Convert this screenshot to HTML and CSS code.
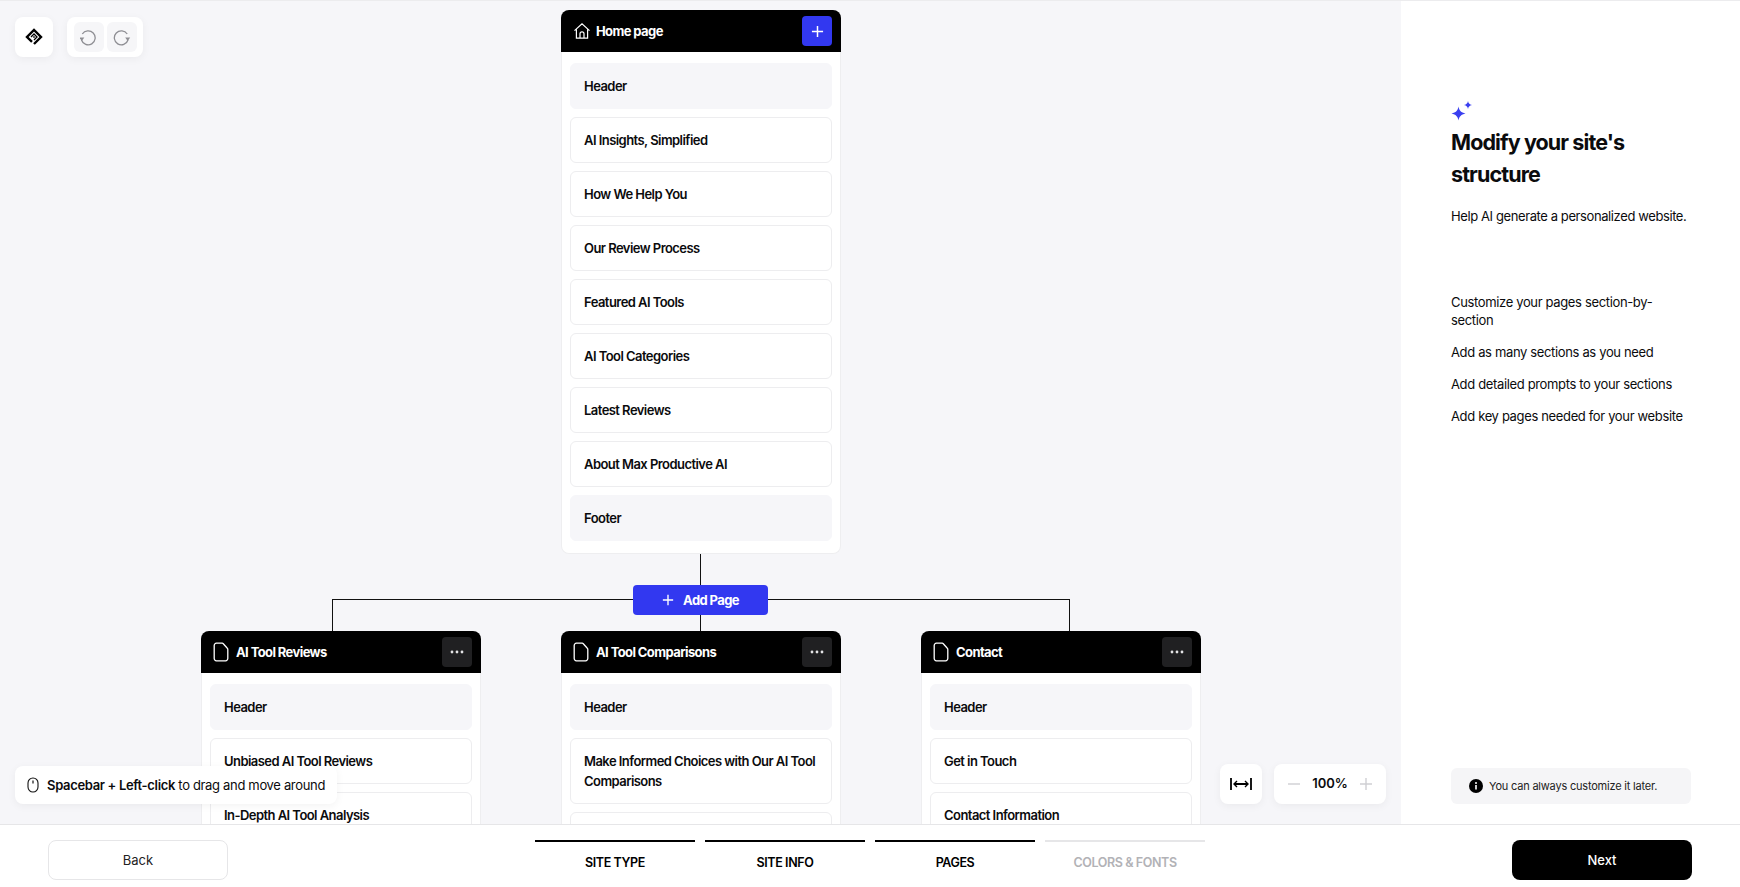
FILE: index.html
```html
<!DOCTYPE html>
<html lang="en">
<head>
  <meta charset="UTF-8">
  <title>Modify your site's structure</title>
  <link rel="stylesheet" href="styles.css">
</head>
<body>
  <svg class="sprites" width="0" height="0">
    <symbol id="icon-doc" viewBox="0 0 16 20">
      <path d="M3.400 1.200h5.800c.4 0 .8.200 1.100.5l4 4.600c.3.300.5.700.5 1.100v9.200a2.200 2.200 0 0 1-2.200 2.200H3.400a2.200 2.200 0 0 1-2.200-2.200V3.400a2.200 2.200 0 0 1 2.200-2.200z" fill="none" stroke="currentColor" stroke-width="1.300"/>
    </symbol>
    <symbol id="icon-dots" viewBox="0 0 14 4">
      <circle cx="2" cy="2" r="1.400" fill="currentColor"/>
      <circle cx="7" cy="2" r="1.400" fill="currentColor"/>
      <circle cx="12" cy="2" r="1.400" fill="currentColor"/>
    </symbol>
  </svg>

  <div class="workspace">
    <main class="canvas">
      <!-- lineas entre paginas -->
      <div class="line line-down"></div>
      <div class="line line-across"></div>
      <div class="line line-left"></div>
      <div class="line line-right"></div>

      <section class="page-card home-card">
        <div class="page-head">
          <svg class="head-icon home-icon" viewBox="0 0 18 18" width="18" height="18"><path d="M1.500 8.600 9 1.800l7.500 6.800M3.400 7.400v8.800h11.200V7.400M7 16.200v-4.400a2 2 0 0 1 4 0v4.400" fill="none" stroke="currentColor" stroke-width="1.200"/></svg>
          <span class="page-name">Home page</span>
          <button class="head-btn head-btn-add">
            <svg viewBox="0 0 14 14" width="13" height="13"><path d="M7 1v12M1 7h12" stroke="currentColor" stroke-width="1.600"/></svg>
          </button>
        </div>
        <div class="page-body">
          <div class="section fixed">Header</div>
          <div class="section">AI Insights, Simplified</div>
          <div class="section">How We Help You</div>
          <div class="section">Our Review Process</div>
          <div class="section">Featured AI Tools</div>
          <div class="section">AI Tool Categories</div>
          <div class="section">Latest Reviews</div>
          <div class="section">About Max Productive AI</div>
          <div class="section fixed">Footer</div>
        </div>
      </section>

      <button class="add-page">
        <svg viewBox="0 0 14 14" width="12" height="12"><path d="M7 1v12M1 7h12" stroke="currentColor" stroke-width="1.600"/></svg>
        Add Page
      </button>

      <section class="page-card child-card card-left">
        <div class="page-head">
          <svg class="head-icon" width="16" height="20"><use href="#icon-doc"/></svg>
          <span class="page-name">AI Tool Reviews</span>
          <button class="head-btn"><svg width="14" height="4"><use href="#icon-dots"/></svg></button>
        </div>
        <div class="page-body">
          <div class="section fixed">Header</div>
          <div class="section">Unbiased AI Tool Reviews</div>
          <div class="section">In-Depth AI Tool Analysis</div>
        </div>
      </section>

      <section class="page-card child-card card-middle">
        <div class="page-head">
          <svg class="head-icon" width="16" height="20"><use href="#icon-doc"/></svg>
          <span class="page-name">AI Tool Comparisons</span>
          <button class="head-btn"><svg width="14" height="4"><use href="#icon-dots"/></svg></button>
        </div>
        <div class="page-body">
          <div class="section fixed">Header</div>
          <div class="section">Make Informed Choices with Our AI Tool Comparisons</div>
          <div class="section"></div>
        </div>
      </section>

      <section class="page-card child-card card-right">
        <div class="page-head">
          <svg class="head-icon" width="16" height="20"><use href="#icon-doc"/></svg>
          <span class="page-name">Contact</span>
          <button class="head-btn"><svg width="14" height="4"><use href="#icon-dots"/></svg></button>
        </div>
        <div class="page-body">
          <div class="section fixed">Header</div>
          <div class="section">Get in Touch</div>
          <div class="section">Contact Information</div>
        </div>
      </section>

      <div class="float logo-box">
        <svg viewBox="0 0 20 20" width="20" height="20">
          <path d="M8 14.800 3 10 10 3l7 7-7 7" fill="none" stroke="#000" stroke-width="2.400"/>
          <path d="M7 10 10 7l3 3-3 3" fill="none" stroke="#000" stroke-width="1.300"/>
          <path d="M9.200 10h1.600" stroke="#000" stroke-width="1.600"/>
        </svg>
      </div>
      <div class="float history">
        <button class="history-btn">
          <svg viewBox="1.500 0 18 18" width="18" height="18"><path d="M3.800 6A7 7 0 1 1 3 12" fill="none" stroke="#8e8e93" stroke-width="1.300"/><path d="M0.800 9.600h5L3.300 13z" fill="#8e8e93"/></svg>
        </button>
        <button class="history-btn">
          <svg viewBox="0 0 18 18" width="18" height="18"><path d="M14.200 6A7 7 0 1 0 15 12" fill="none" stroke="#8e8e93" stroke-width="1.300"/><path d="M12.200 9.600h5L14.700 13z" fill="#8e8e93"/></svg>
        </button>
      </div>

      <div class="float hint">
        <svg viewBox="0 0 12 16" width="12" height="16"><rect x="1" y="1" width="10" height="14" rx="5" fill="none" stroke="#111" stroke-width="1.100"/><path d="M6 3.500v3" stroke="#111" stroke-width="1.200"/></svg>
        <span><b>Spacebar + Left-click</b> to drag and move around</span>
      </div>

      <div class="float fit-btn">
        <svg viewBox="0 0 22 12" width="22" height="12"><path d="M1 0v12M21 0v12M4 6h14" stroke="#000" stroke-width="1.800" fill="none"/><path d="M7 3 4 6l3 3M15 3l3 3-3 3" stroke="#000" stroke-width="1.400" fill="none"/></svg>
      </div>
      <div class="float zoom-box">
        <svg viewBox="0 0 12 12" width="12" height="12"><path d="M0 6h12" stroke="#cfcfd3" stroke-width="1.400"/></svg>
        <span class="zoom-value">100%</span>
        <svg viewBox="0 0 12 12" width="12" height="12"><path d="M0 6h12M6 0v12" stroke="#cfcfd3" stroke-width="1.400"/></svg>
      </div>
    </main>

    <aside class="side">
      <svg class="sparkle" viewBox="0 0 22 20" width="22" height="20">
        <path d="M7.500 5.500C8.300 9.500 10 11.500 14.500 12.500 10 13.500 8.300 15.500 7.500 19.500 6.700 15.500 5 13.500.5 12.500 5 11.500 6.700 9.500 7.500 5.500z" fill="#3a3ff0"/>
        <path d="M17 0C17.400 2.300 18.300 3.300 21 4 18.300 4.700 17.400 5.700 17 8 16.600 5.700 15.700 4.700 13 4 15.700 3.300 16.600 2.300 17 0z" fill="#3a3ff0"/>
      </svg>
      <h2 class="side-title">Modify your site's structure</h2>
      <p class="side-lead">Help AI generate a personalized website.</p>
      <ul class="tips">
        <li>Customize your pages section-by-section</li>
        <li>Add as many sections as you need</li>
        <li>Add detailed prompts to your sections</li>
        <li>Add key pages needed for your website</li>
      </ul>
      <div class="note">
        <svg viewBox="0 0 14 14" width="14" height="14"><circle cx="7" cy="7" r="7" fill="#000"/><path d="M7 6v4.500" stroke="#fff" stroke-width="1.600"/><circle cx="7" cy="3.900" r="1" fill="#fff"/></svg>
        You can always customize it later.
      </div>
    </aside>
  </div>

  <footer class="bottom-bar">
    <button class="btn btn-back">Back</button>
    <div class="steps">
      <div class="step done">SITE TYPE</div>
      <div class="step done">SITE INFO</div>
      <div class="step done">PAGES</div>
      <div class="step">COLORS &amp; FONTS</div>
    </div>
    <button class="btn btn-next">Next</button>
  </footer>
</body>
</html>
```

FILE: styles.css
```css
* {
  margin: 0;
  padding: 0;
  box-sizing: border-box;
}

body {
  width: 1740px;
  height: 887px;
  overflow: hidden;
  font-family: 'Inter', 'Noto Sans', sans-serif;
  color: #0b0b0d;
  background: #fff;
  display: flex;
  flex-direction: column;
}

button {
  font-family: inherit;
  border: none;
  cursor: pointer;
}

.sprites {
  position: absolute;
}

.workspace {
  flex: 1;
  min-height: 0;
  display: flex;
  border-top: 1px solid #ececee;
}

/* Canvas */
.canvas {
  position: relative;
  width: 1401px;
  overflow: hidden;
  background: #f6f6f9;
}

.line {
  position: absolute;
  background: #111;
}

.line-down {
  left: 700px;
  top: 550px;
  width: 1px;
  height: 85px;
}

.line-across {
  left: 332px;
  top: 598px;
  width: 738px;
  height: 1px;
}

.line-left {
  left: 332px;
  top: 598px;
  width: 1px;
  height: 35px;
}

.line-right {
  left: 1069px;
  top: 598px;
  width: 1px;
  height: 35px;
}

.page-card {
  position: absolute;
  width: 280px;
  background: #fff;
  border-radius: 8px;
  border: 1px solid #eeeef0;
  border-top: none;
}

.home-card {
  left: 561px;
  top: 9px;
}

.child-card {
  top: 630px;
}

.card-left {
  left: 201px;
}

.card-middle {
  left: 561px;
}

.card-right {
  left: 921px;
}

.page-head {
  height: 42px;
  margin: 0 -1px;
  padding: 0 9px 0 12px;
  display: flex;
  align-items: center;
  background: #000;
  color: #fff;
  border-radius: 8px 8px 0 0;
}

.head-icon {
  flex: none;
  margin-right: 7px;
}

.home-icon {
  margin-right: 5px;
}

.page-name {
  flex: 1;
  padding-bottom: 1px;
  font-size: 13px;
  font-weight: 700;
  letter-spacing: -0.6px;
}

.head-btn {
  width: 30px;
  height: 30px;
  border-radius: 4px;
  background: #202022;
  color: #e4e4e6;
  display: flex;
  align-items: center;
  justify-content: center;
}

.head-btn-add {
  background: #3238f0;
  color: #fff;
}

.page-body {
  padding: 11px 8px 12px;
  display: flex;
  flex-direction: column;
  gap: 8px;
}

.section {
  min-height: 46px;
  padding: 12px 13px;
  font-size: 13px;
  font-weight: 600;
  line-height: 20px;
  letter-spacing: -0.55px;
  border: 1px solid #ededef;
  border-radius: 6px;
  background: #fff;
}

.section.fixed {
  background: #f6f6f9;
  border-color: #f6f6f9;
}

.add-page {
  position: absolute;
  left: 633px;
  top: 584px;
  width: 135px;
  height: 30px;
  display: flex;
  align-items: center;
  justify-content: center;
  gap: 9px;
  background: #3238f0;
  color: #fff;
  font-size: 13px;
  font-weight: 700;
  letter-spacing: -0.6px;
  border-radius: 4px;
}

/* Floating controls */
.float {
  position: absolute;
  background: #fff;
  border-radius: 8px;
  box-shadow: 0 2px 8px rgba(0, 0, 0, 0.05);
  display: flex;
  align-items: center;
}

.logo-box {
  left: 15px;
  top: 16px;
  width: 38px;
  height: 40px;
  justify-content: center;
}

.history {
  left: 67px;
  top: 16px;
  width: 76px;
  height: 40px;
  justify-content: center;
  gap: 3px;
}

.history-btn {
  width: 30px;
  height: 30px;
  background: #f6f6f8;
  border-radius: 6px;
  display: flex;
  align-items: center;
  justify-content: center;
}

.hint {
  left: 15px;
  top: 765px;
  width: 322px;
  height: 38px;
  padding-left: 12px;
  gap: 8px;
  font-size: 13px;
  letter-spacing: -0.33px;
  white-space: nowrap;
}

.hint b {
  font-weight: 600;
}

.fit-btn {
  left: 1220px;
  top: 763px;
  width: 42px;
  height: 40px;
  justify-content: center;
}

.zoom-box {
  left: 1274px;
  top: 763px;
  width: 112px;
  height: 40px;
  justify-content: space-between;
  padding: 0 14px;
}

.zoom-value {
  padding-bottom: 2px;
  font-size: 13px;
  font-weight: 600;
}

/* Right panel */
.side {
  flex: 1;
  padding: 100px 49px 20px 50px;
  display: flex;
  flex-direction: column;
  font-size: 13px;
  letter-spacing: -0.35px;
}

.sparkle {
  display: block;
  flex: none;
}

.side-title {
  margin-top: 5px;
  font-size: 21.500px;
  font-weight: 700;
  line-height: 32px;
  letter-spacing: -0.9px;
}

.side-lead {
  margin-top: 16px;
  line-height: 20px;
  letter-spacing: -0.4px;
}

.tips {
  margin-top: 67px;
  list-style: none;
  display: flex;
  flex-direction: column;
  gap: 14px;
}

.tips li {
  line-height: 18px;
}

.note {
  margin-top: auto;
  height: 36px;
  padding-left: 18px;
  display: flex;
  align-items: center;
  gap: 6px;
  font-size: 11px;
  letter-spacing: -0.2px;
  color: #222;
  background: #f5f5f7;
  border-radius: 6px;
}

/* Bottom bar */
.bottom-bar {
  flex: none;
  height: 63px;
  padding: 15px 48px 7px;
  display: flex;
  justify-content: space-between;
  align-items: flex-start;
  background: #fff;
  border-top: 1px solid #e6e6e8;
}

.btn {
  width: 180px;
  height: 40px;
  padding-bottom: 1px;
  font-size: 13px;
  border-radius: 8px;
}

.btn-back {
  background: #fff;
  color: #222;
  border: 1px solid #e6e6e8;
}

.btn-next {
  background: #000;
  color: #fff;
  font-weight: 500;
}

.steps {
  display: flex;
  gap: 10px;
}

.step {
  width: 160px;
  height: 46px;
  padding-top: 13px;
  text-align: center;
  font-size: 12.500px;
  font-weight: 600;
  letter-spacing: -0.4px;
  color: #b2b2b6;
  border-top: 2px solid #e6e6e8;
}

.step.done {
  color: #000;
  border-top-color: #000;
}
```
